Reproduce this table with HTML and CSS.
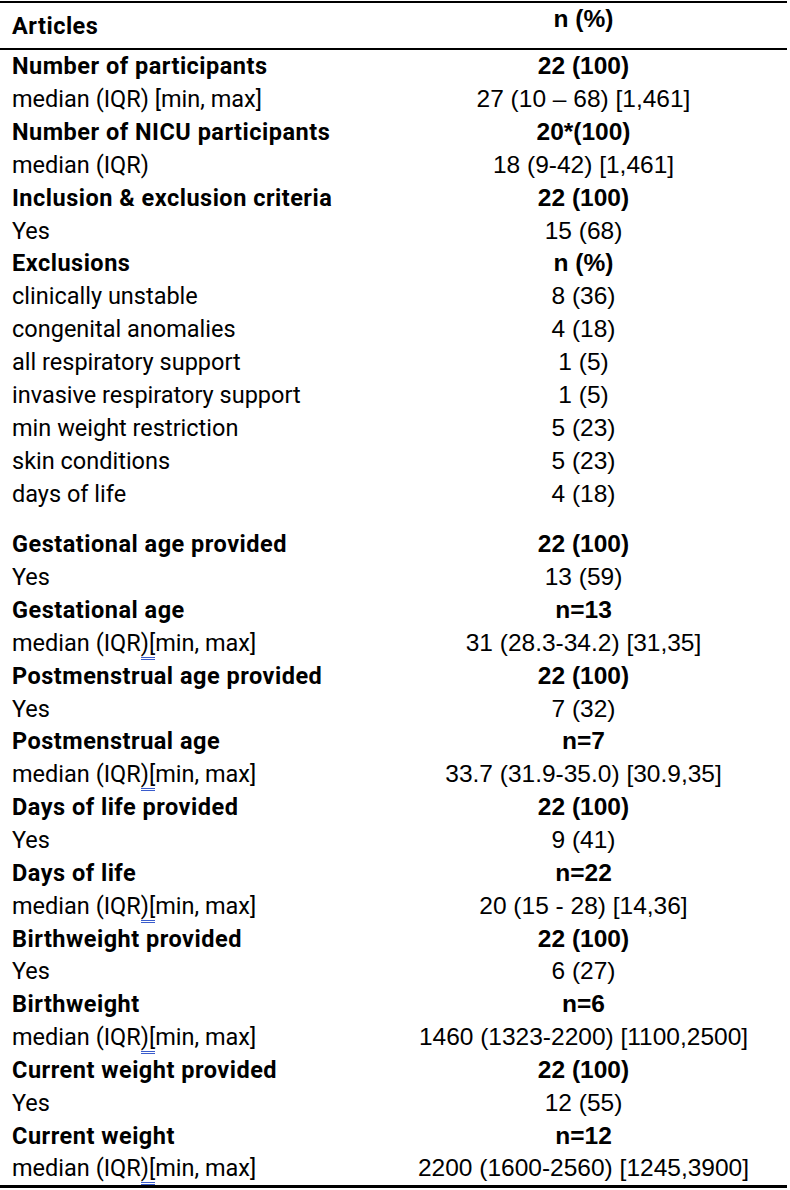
FILE: index.html
```html
<!DOCTYPE html>
<html>
<head>
<meta charset="utf-8">
<link rel="stylesheet" href="styles.css">
</head>
<body>
<table class="tbl">
  <thead>
    <tr><th class="lab">Articles</th><th class="val">n (%)</th></tr>
  </thead>
  <tbody>
    <tr class="b"><td class="lab">Number of participants</td><td class="val">22 (100)</td></tr>
    <tr><td class="lab">median (IQR) [min, max]</td><td class="val">27 (10 – 68) [1,461]</td></tr>
    <tr class="b"><td class="lab">Number of NICU participants</td><td class="val">20*(100)</td></tr>
    <tr><td class="lab">median (IQR)</td><td class="val">18 (9-42) [1,461]</td></tr>
    <tr class="b"><td class="lab">Inclusion &amp; exclusion criteria</td><td class="val">22 (100)</td></tr>
    <tr><td class="lab">Yes</td><td class="val">15 (68)</td></tr>
    <tr class="b"><td class="lab">Exclusions</td><td class="val">n (%)</td></tr>
    <tr><td class="lab">clinically unstable</td><td class="val">8 (36)</td></tr>
    <tr><td class="lab">congenital anomalies</td><td class="val">4 (18)</td></tr>
    <tr><td class="lab">all respiratory support</td><td class="val">1 (5)</td></tr>
    <tr><td class="lab">invasive respiratory support</td><td class="val">1 (5)</td></tr>
    <tr><td class="lab">min weight restriction</td><td class="val">5 (23)</td></tr>
    <tr><td class="lab">skin conditions</td><td class="val">5 (23)</td></tr>
    <tr class="gap"><td class="lab">days of life</td><td class="val">4 (18)</td></tr>
    <tr class="b"><td class="lab">Gestational age provided</td><td class="val">22 (100)</td></tr>
    <tr><td class="lab">Yes</td><td class="val">13 (59)</td></tr>
    <tr class="b"><td class="lab">Gestational age</td><td class="val">n=13</td></tr>
    <tr><td class="lab">median (IQR<span class="mark">)[</span>min, max]</td><td class="val">31 (28.3-34.2) [31,35]</td></tr>
    <tr class="b"><td class="lab">Postmenstrual age provided</td><td class="val">22 (100)</td></tr>
    <tr><td class="lab">Yes</td><td class="val">7 (32)</td></tr>
    <tr class="b"><td class="lab">Postmenstrual age</td><td class="val">n=7</td></tr>
    <tr><td class="lab">median (IQR<span class="mark">)[</span>min, max]</td><td class="val">33.7 (31.9-35.0) [30.9,35]</td></tr>
    <tr class="b"><td class="lab">Days of life provided</td><td class="val">22 (100)</td></tr>
    <tr><td class="lab">Yes</td><td class="val">9 (41)</td></tr>
    <tr class="b"><td class="lab">Days of life</td><td class="val">n=22</td></tr>
    <tr><td class="lab">median (IQR<span class="mark">)[</span>min, max]</td><td class="val">20 (15 - 28) [14,36]</td></tr>
    <tr class="b"><td class="lab">Birthweight provided</td><td class="val">22 (100)</td></tr>
    <tr><td class="lab">Yes</td><td class="val">6 (27)</td></tr>
    <tr class="b"><td class="lab">Birthweight</td><td class="val">n=6</td></tr>
    <tr><td class="lab">median (IQR<span class="mark">)[</span>min, max]</td><td class="val">1460 (1323-2200) [1100,2500]</td></tr>
    <tr class="b"><td class="lab">Current weight provided</td><td class="val">22 (100)</td></tr>
    <tr><td class="lab">Yes</td><td class="val">12 (55)</td></tr>
    <tr class="b"><td class="lab">Current weight</td><td class="val">n=12</td></tr>
    <tr class="last"><td class="lab">median (IQR<span class="mark">)[</span>min, max]</td><td class="val">2200 (1600-2560) [1245,3900]</td></tr>
  </tbody>
</table>
</body>
</html>
```

FILE: styles.css
```css
html, body {
  margin: 0;
  padding: 0;
  background: #ffffff;
}

.tbl {
  width: 787px;
  border-collapse: collapse;
  color: #000;
  margin-top: 1px;
}

.tbl thead tr {
  border-top: 2px solid #000;
  border-bottom: 2px solid #000;
}

.tbl th {
  height: 43px;
  padding: 0;
  font-weight: 700;
  line-height: 28px;
}

.tbl th.lab {
  vertical-align: middle;
  padding-top: 1px;
}

.tbl th.val {
  vertical-align: top;
  padding-top: 2px;
}

.tbl td {
  height: 32.85px;
  padding: 0;
  vertical-align: middle;
  line-height: 28px;
}

.lab {
  width: 368px;
  padding-left: 12px !important;
  text-align: left;
  font-family: Roboto, "Liberation Sans", sans-serif;
  font-size: 23.5px;
  letter-spacing: 0;
}

.b .lab,
.tbl th.lab {
  letter-spacing: 0.5px;
}

.val {
  text-align: center;
  font-family: "Liberation Sans", Arial, sans-serif;
  font-size: 24.5px;
  letter-spacing: 0;
}

.b td {
  font-weight: 700;
}

.tbl tr.gap td {
  height: 48px;
  vertical-align: top;
  padding-top: 3px;
}

.tbl tr.last {
  border-bottom: 3px solid #000;
}

.mark {
  border-bottom: 3px double #3a5ccc;
}
```
